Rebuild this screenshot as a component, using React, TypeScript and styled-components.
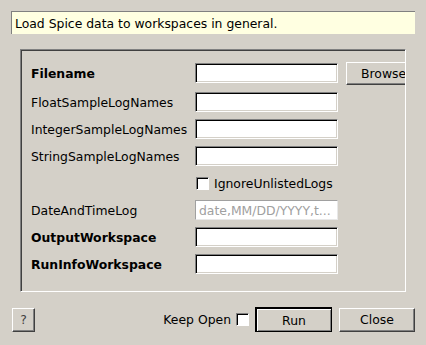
import React, { useState } from 'react';
import styled, { createGlobalStyle } from 'styled-components';

const GlobalStyle = createGlobalStyle`
    html, body {
        margin: 0;
        padding: 0;
        background: #d4d0c8;
    }
    body {
        font-family: "DejaVu Sans", "Liberation Sans", sans-serif;
        font-size: 12.4px;
        color: #000;
    }
`;

type Field = {
    name: string;
    required?: boolean;
    placeholder?: string;
    browse?: boolean;
};

const fields: Field[] = [
    { name: 'Filename', required: true, browse: true },
    { name: 'FloatSampleLogNames' },
    { name: 'IntegerSampleLogNames' },
    { name: 'StringSampleLogNames' },
];

const lowerFields: Field[] = [
    { name: 'DateAndTimeLog', placeholder: 'date,MM/DD/YYYY,t...' },
    { name: 'OutputWorkspace', required: true },
    { name: 'RunInfoWorkspace', required: true },
];

const App = () => {
    const [ignoreUnlisted, setIgnoreUnlisted] = useState(false);
    const [keepOpen, setKeepOpen] = useState(false);

    function renderRow(field: Field) {
        return (
            <React.Fragment key={field.name}>
                <Label $bold={field.required}>{field.name}</Label>
                <TextInput $muted={!!field.placeholder} placeholder={field.placeholder} />
                {field.browse ? <BrowseButton>Browse</BrowseButton> : <span />}
            </React.Fragment>
        );
    }

    return (
        <Window>
            <GlobalStyle />
            <Description>Load Spice data to workspaces in general.</Description>
            <ScrollFrame>
                <FormGrid>
                    {fields.map(renderRow)}
                    <span />
                    <CheckRow onClick={() => setIgnoreUnlisted(!ignoreUnlisted)}>
                        <CheckBox>{ignoreUnlisted ? '✓' : ''}</CheckBox>
                        IgnoreUnlistedLogs
                    </CheckRow>
                    <span />
                    {lowerFields.map(renderRow)}
                </FormGrid>
            </ScrollFrame>
            <ButtonBar>
                <HelpButton>?</HelpButton>
                <Spacer />
                <KeepOpen onClick={() => setKeepOpen(!keepOpen)}>
                    Keep Open
                    <CheckBox>{keepOpen ? '✓' : ''}</CheckBox>
                </KeepOpen>
                <RunButton>Run</RunButton>
                <CloseButton>Close</CloseButton>
            </ButtonBar>
        </Window>
    );
};

const Window = styled.div`
    width: 426px;
    height: 345px;
    box-sizing: border-box;
    padding: 11px 11px 0 11px;
    display: flex;
    flex-direction: column;
`;

const Description = styled.div`
    height: 23px;
    box-sizing: border-box;
    background: #ffffe1;
    border-top: 1px solid #808080;
    border-left: 1px solid #808080;
    padding: 0 3px;
    display: flex;
    align-items: center;
    white-space: nowrap;
`;

const ScrollFrame = styled.div`
    margin: 15px 9px 0 9px;
    width: 386px;
    height: 243px;
    box-sizing: border-box;
    border: 1px solid;
    border-color: #808080 #fff #fff #808080;
    box-shadow: inset 1px 1px #404040;
    overflow: hidden;
`;

const FormGrid = styled.div`
    display: grid;
    grid-template-columns: 156px 143px 75px;
    column-gap: 8px;
    row-gap: 7px;
    align-items: center;
    padding: 12px 0 0 10px;
    & > :nth-child(1), & > :nth-child(2) {
        margin-bottom: 1px;
    }
`;

const Label = styled.span<{ $bold?: boolean }>`
    font-weight: ${p => (p.$bold ? 'bold' : 'normal')};
    white-space: nowrap;
`;

const TextInput = styled.input<{ $muted?: boolean }>`
    width: 143px;
    height: 20px;
    box-sizing: border-box;
    margin: 0;
    padding: 0 3px;
    font: inherit;
    background: #fff;
    border: 1px solid;
    border-color: ${p => (p.$muted ? '#a0a0a0 #e8e8e8 #e8e8e8 #a0a0a0' : '#808080 #fff #fff #808080')};
    box-shadow: ${p => (p.$muted ? 'none' : 'inset 1px 1px #000, inset -1px -1px #d4d0c8')};
    outline: none;
    &::placeholder {
        color: #a0a0a0;
    }
`;

const Bevel = styled.button`
    box-sizing: border-box;
    margin: 0;
    padding: 0;
    font: inherit;
    color: #000;
    background: #d4d0c8;
    border: 1px solid;
    border-color: #fff #404040 #404040 #fff;
    box-shadow: inset -1px -1px #808080;
    cursor: pointer;
`;

const BrowseButton = styled(Bevel)`
    width: 75px;
    height: 23px;
    text-align: left;
    padding-left: 14px;
    white-space: nowrap;
`;

const CheckRow = styled.label`
    display: flex;
    align-items: center;
    gap: 5px;
    height: 20px;
    padding-left: 1px;
    white-space: nowrap;
    cursor: pointer;
`;

const CheckBox = styled.span`
    width: 13px;
    height: 13px;
    box-sizing: border-box;
    background: #fff;
    border: 1px solid;
    border-color: #808080 #fff #fff #808080;
    box-shadow: inset 1px 1px #000;
    font-size: 10px;
    line-height: 11px;
    text-align: center;
`;

const ButtonBar = styled.div`
    display: flex;
    align-items: center;
    margin: 15px 0 0 1px;
    height: 25px;
`;

const Spacer = styled.div`
    flex-grow: 1;
`;

const HelpButton = styled(Bevel)`
    width: 23px;
    height: 24px;
    color: #404040;
`;

const KeepOpen = styled.label`
    display: flex;
    align-items: center;
    gap: 5px;
    margin-right: 6px;
    cursor: pointer;
`;

const RunButton = styled(Bevel)`
    width: 77px;
    height: 25px;
    border-width: 2px 1px 1px 2px;
    border-color: #000;
    box-shadow: inset 1px 1px #fff, inset -1px -1px #808080;
    margin-right: 7px;
`;

const CloseButton = styled(Bevel)`
    width: 76px;
    height: 24px;
`;

export default App;
